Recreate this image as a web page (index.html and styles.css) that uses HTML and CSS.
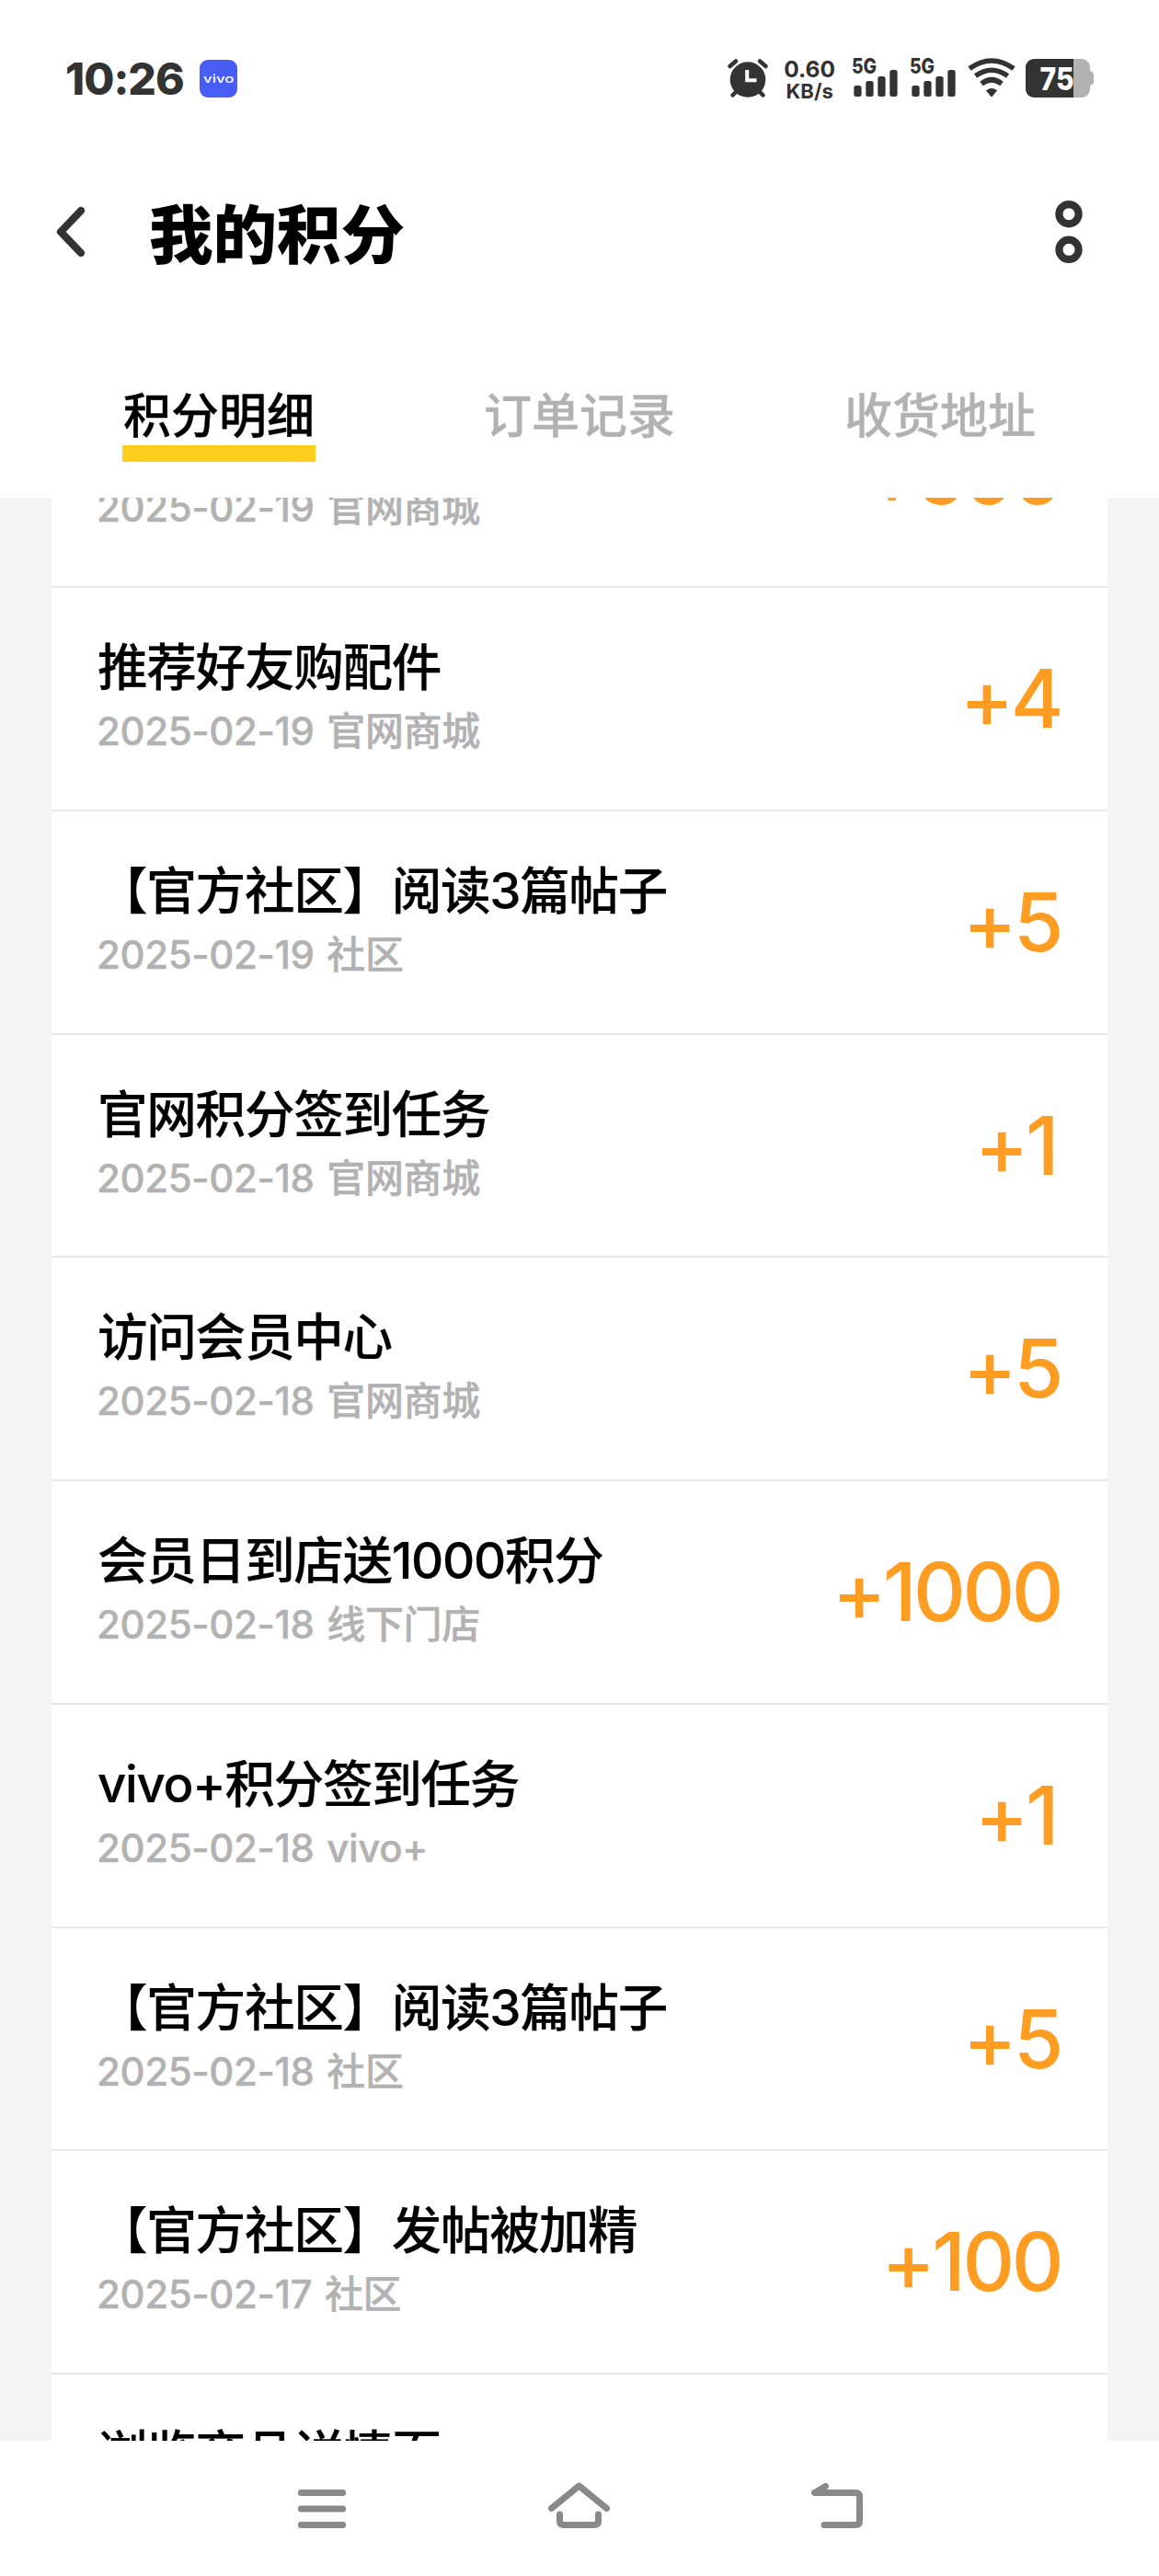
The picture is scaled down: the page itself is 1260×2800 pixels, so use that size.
FILE: index.html
```html
<!DOCTYPE html>
<html lang="zh-CN">
<head>
<meta charset="utf-8">
<title>我的积分</title>
<link rel="stylesheet" href="styles.css">
</head>
<body>
<div class="screen">
  <div class="status">
    <span class="time">10:26</span>
    <svg class="app-badge" width="41" height="41" viewBox="0 0 41 41"><rect width="41" height="41" rx="9" fill="#475df4"/><text x="4" y="24.500" font-size="12.500" textLength="33.500" lengthAdjust="spacingAndGlyphs" fill="#fff">vivo</text></svg>
    <svg class="alarm" width="44" height="42" viewBox="0 0 44 42"><path d="M5.500 39.500 L12 33M38.500 39.500 L32 33" stroke="#333" stroke-width="4.500" stroke-linecap="round"/><circle cx="22" cy="22.500" r="19.300" fill="#333"/><path d="M2.500 8 L9 2.500M41.500 8 L35 2.500" stroke="#fff" stroke-width="9"/><path d="M2.500 8 L9 2.500M41.500 8 L35 2.500" stroke="#333" stroke-width="4.500" stroke-linecap="round"/><path d="M21.200 12v11.300h10.300" fill="none" stroke="#fff" stroke-width="4"/></svg>
    <div class="speed"><span class="speed-num">0.60</span><span class="speed-unit">KB/s</span></div>
    <svg class="signal" width="50" height="43" viewBox="0 0 50 43"><text x="0" y="17" font-size="22.500" textLength="27" lengthAdjust="spacingAndGlyphs">5G</text><g fill="#333"><rect x="2.300" y="30" width="8.300" height="12" rx="2.500"/><rect x="15.300" y="25" width="8.300" height="17" rx="2.500"/><rect x="28.300" y="20" width="8.300" height="22" rx="2.500"/><rect x="41.300" y="13" width="8.300" height="29" rx="2.500"/></g></svg>
    <svg class="signal second" width="50" height="43" viewBox="0 0 50 43"><text x="0" y="17" font-size="22.500" textLength="27" lengthAdjust="spacingAndGlyphs">5G</text><g fill="#333"><rect x="2.300" y="30" width="8.300" height="12" rx="2.500"/><rect x="15.300" y="25" width="8.300" height="17" rx="2.500"/><rect x="28.300" y="20" width="8.300" height="22" rx="2.500"/><rect x="41.300" y="13" width="8.300" height="29" rx="2.500"/></g></svg>
    <svg class="wifi" width="52" height="43" viewBox="0 0 52 43"><g fill="none" stroke="#333" stroke-width="5.600"><path d="M2 11.500Q26-5.500 50 11.500"/><path d="M8.500 19.500Q26 7 43.500 19.500"/><path d="M15 28Q26 19.500 37 28"/></g><path d="M20.500 35.500Q26 31.500 31.500 35.500L26 42z" fill="#333" stroke="#333" stroke-linejoin="round"/></svg>
    <svg class="battery" width="75" height="42" viewBox="0 0 75 42"><path d="M52 0h9a9 9 0 0 1 9 9v4q4 1 4 4v8q0 3-4 4v4a9 9 0 0 1-9 9h-9z" fill="#b2b2b2"/><path d="M52 0H9a9 9 0 0 0-9 9v24a9 9 0 0 0 9 9h43z" fill="#333"/><text x="15.500" y="33.500" font-size="34" textLength="37" lengthAdjust="spacingAndGlyphs" fill="#fff">75</text></svg>
  </div>
  <header class="header">
    <svg class="back" width="36" height="60" viewBox="0 0 36 60"><path d="M30 7 8 30 30 53" fill="none" stroke="#333" stroke-width="8.300" stroke-linecap="round" stroke-linejoin="round"/></svg>
    <h1 class="page-title">我的积分</h1>
    <svg class="more" width="30" height="68" viewBox="0 0 30 68"><g fill="none" stroke="#333" stroke-width="8.200"><circle cx="15" cy="14.700" r="10.600"/><circle cx="15" cy="53.300" r="10.600"/></g></svg>
  </header>
  <nav class="tabs">
    <a class="tab active">积分明细</a>
    <a class="tab">订单记录</a>
    <a class="tab">收货地址</a>
  </nav>
  <main class="viewport">
    <ul class="list">
      <li class="row"><div class="info"><p class="name">官网购物</p><p class="meta">2025-02-19 官网商城</p></div><b class="points">+500</b></li>
      <li class="row"><div class="info"><p class="name">推荐好友购配件</p><p class="meta">2025-02-19 官网商城</p></div><b class="points">+4</b></li>
      <li class="row"><div class="info"><p class="name">【官方社区】阅读3篇帖子</p><p class="meta">2025-02-19 社区</p></div><b class="points">+5</b></li>
      <li class="row"><div class="info"><p class="name">官网积分签到任务</p><p class="meta">2025-02-18 官网商城</p></div><b class="points points-narrow">+1</b></li>
      <li class="row"><div class="info"><p class="name">访问会员中心</p><p class="meta">2025-02-18 官网商城</p></div><b class="points">+5</b></li>
      <li class="row"><div class="info"><p class="name">会员日到店送1000积分</p><p class="meta">2025-02-18 线下门店</p></div><b class="points">+1000</b></li>
      <li class="row"><div class="info"><p class="name">vivo+积分签到任务</p><p class="meta">2025-02-18 vivo+</p></div><b class="points points-narrow">+1</b></li>
      <li class="row"><div class="info"><p class="name">【官方社区】阅读3篇帖子</p><p class="meta">2025-02-18 社区</p></div><b class="points">+5</b></li>
      <li class="row"><div class="info"><p class="name">【官方社区】发帖被加精</p><p class="meta">2025-02-17 社区</p></div><b class="points">+100</b></li>
      <li class="row"><div class="info"><p class="name">浏览商品详情页</p></div></li>
    </ul>
  </main>
  <footer class="sysnav">
    <svg width="52" height="52" viewBox="0 0 52 52"><g fill="#898989"><rect y="9" width="52" height="7" rx="3"/><rect y="26.500" width="52" height="7" rx="3"/><rect y="44" width="52" height="7" rx="3"/></g></svg>
    <svg width="68" height="52" viewBox="0 0 68 52"><g fill="none" stroke="#898989" stroke-width="7" stroke-linecap="round" stroke-linejoin="round"><path d="M4.500 29.500 34.500 5 64.500 29.500"/><path d="M13.500 36V43q0 4.500 4.500 4.500h33q4.500 0 4.500-4.500v-7"/></g></svg>
    <svg width="56" height="52" viewBox="0 0 56 52"><path d="M15.500 5.500 3.500 12.500H48q4.500 0 4.500 4.500v26q0 4.500-4.500 4.500H14" fill="none" stroke="#898989" stroke-width="7" stroke-linecap="round" stroke-linejoin="round"/></svg>
  </footer>
</div>
</body>
</html>
```
FILE: styles.css
```css
* { box-sizing: border-box; margin: 0; padding: 0; }
body { font-family: "Inter", "Noto Sans CJK SC", sans-serif; background: #fff; color: #000; }
.screen { width: 1260px; height: 2800px; overflow: hidden; display: flex; flex-direction: column; background: #fff; }

.status { height: 170px; padding: 63px 70px 0 71px; display: flex; align-items: flex-start; color: #333; }
.status svg { flex: none; overflow: visible; }
.status text { font-weight: 800; }
.status .app-badge text { font-weight: 500; }
.signal text { fill: #333; }
.time { width: 148px; font-size: 48px; line-height: 46px; font-weight: 800; letter-spacing: -1px; }
.app-badge { margin-top: 2px; }
.alarm { margin: 1px 0 0 533px; }
.speed { width: 56px; margin-left: 17px; display: flex; flex-direction: column; align-items: center; font-weight: 700; }
.speed-num { font-size: 24.500px; line-height: 24px; }
.speed-unit { font-size: 22px; line-height: 24px; }
.signal { margin-left: 18px; }
.signal.second { margin-left: 13px; }
.wifi { margin-left: 13px; }
.battery { margin: 1px 0 0 11px; }

.header { height: 170px; padding: 0 83px 0 58px; display: flex; align-items: center; }
.header .back { margin-top: -7px; }
.header .more { margin: -6px 0 0 auto; }
.page-title { margin: 2px 0 0 68px; font-size: 69.500px; line-height: 102px; font-weight: 900; }

.tabs { height: 201px; padding: 74px 42px 0; display: flex; align-items: flex-start; }
.tab { flex: 1; display: flex; flex-direction: column; align-items: center; font-size: 52px; line-height: 78px; font-weight: 500; color: #b2b2b2; -webkit-text-stroke: 0.300px; }
.tab.active { color: #000; }
.tab.active::after { content: ""; width: 210px; height: 18px; margin-top: -8px; background: #ffcd1c; }

.viewport { height: 2112px; padding: 0 56px; overflow: hidden; background: #f4f4f4; display: flex; flex-direction: column; }
.list { margin-top: -144.750px; list-style: none; background: #fff; }
.row { height: 242.750px; padding: 0 50px; border-bottom: 2px solid #e8e8e8; display: flex; justify-content: space-between; align-items: flex-start; }
.info { padding-top: 46px; }
.name { font-size: 54.600px; line-height: 80px; font-weight: 500; letter-spacing: -1.300px; white-space: nowrap; -webkit-text-stroke: 0.200px; }
.meta { margin-left: -1px; font-size: 42px; line-height: 60px; font-weight: 500; letter-spacing: -0.400px; word-spacing: 3px; color: #b2b2b2; white-space: nowrap; -webkit-text-stroke: 0.400px; }
.points { padding: 66px 1px 0 0; font-size: 88px; line-height: 108px; font-weight: 500; letter-spacing: -3.500px; color: #ff9c22; }
.points-narrow { padding-right: 6px; }

.sysnav { height: 147px; padding: 44px 322px 0 324px; display: flex; justify-content: space-between; align-items: flex-start; background: #fff; }
```
